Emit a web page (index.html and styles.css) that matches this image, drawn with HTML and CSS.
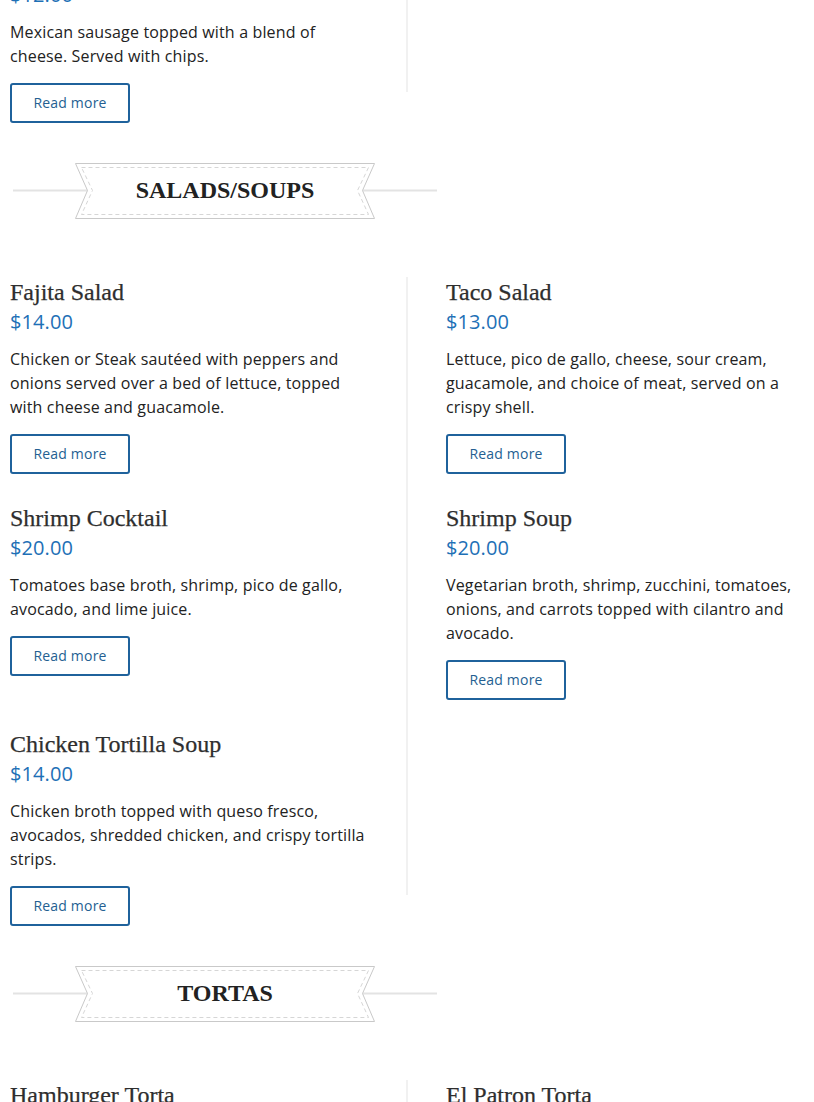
FILE: index.html
```html
<!DOCTYPE html>
<html lang="en">
<head>
<meta charset="utf-8">
<title>Menu</title>
<link rel="stylesheet" href="styles.css">
</head>
<body>
<main class="page">
  <section class="menu-grid menu-grid--first">
    <div class="cell cell-left">
      <div class="price">$12.00</div>
      <p class="desc">Mexican sausage topped with a blend of cheese. Served with chips.</p>
      <a class="btn" href="#">Read more</a>
    </div>
  </section>

  <header class="cat-head">
    <svg class="ribbon" width="430" height="57" viewBox="0 0 430 57" aria-hidden="true">
      <line x1="3" y1="27.5" x2="427" y2="27.5" stroke="#e3e3e3" stroke-width="2"/>
      <polygon points="65.5,0.5 364.5,0.5 352.5,27.5 364.5,55.5 65.5,55.5 77.5,27.5" fill="#fff" stroke="#c9c9c9" stroke-width="1"/>
      <polygon points="71.5,4.5 358.5,4.5 347.5,27.5 358.5,51.5 71.5,51.5 82.5,27.5" fill="none" stroke="#d6d6d6" stroke-width="1" stroke-dasharray="4 3"/>
    </svg>
    <h2 class="cat-title">SALADS/SOUPS</h2>
  </header>

  <section class="menu-grid">
    <div class="cell cell-left">
      <h3 class="title">Fajita Salad</h3>
      <div class="price">$14.00</div>
      <p class="desc">Chicken or Steak sautéed with peppers and onions served over a bed of lettuce, topped with cheese and guacamole.</p>
      <a class="btn" href="#">Read more</a>
    </div>
    <div class="cell cell-right">
      <h3 class="title">Taco Salad</h3>
      <div class="price">$13.00</div>
      <p class="desc">Lettuce, pico de gallo, cheese, sour cream, guacamole, and choice of meat, served on a crispy shell.</p>
      <a class="btn" href="#">Read more</a>
    </div>
    <div class="cell cell-left">
      <h3 class="title">Shrimp Cocktail</h3>
      <div class="price">$20.00</div>
      <p class="desc">Tomatoes base broth, shrimp, pico de gallo, avocado, and lime juice.</p>
      <a class="btn" href="#">Read more</a>
    </div>
    <div class="cell cell-right">
      <h3 class="title">Shrimp Soup</h3>
      <div class="price">$20.00</div>
      <p class="desc">Vegetarian broth, shrimp, zucchini, tomatoes, onions, and carrots topped with cilantro and avocado.</p>
      <a class="btn" href="#">Read more</a>
    </div>
    <div class="cell cell-left">
      <h3 class="title">Chicken Tortilla Soup</h3>
      <div class="price">$14.00</div>
      <p class="desc">Chicken broth topped with queso fresco, avocados, shredded chicken, and crispy tortilla strips.</p>
      <a class="btn" href="#">Read more</a>
    </div>
  </section>

  <header class="cat-head">
    <svg class="ribbon" width="430" height="57" viewBox="0 0 430 57" aria-hidden="true">
      <line x1="3" y1="27.5" x2="427" y2="27.5" stroke="#e3e3e3" stroke-width="2"/>
      <polygon points="65.5,0.5 364.5,0.5 352.5,27.5 364.5,55.5 65.5,55.5 77.5,27.5" fill="#fff" stroke="#c9c9c9" stroke-width="1"/>
      <polygon points="71.5,4.5 358.5,4.5 347.5,27.5 358.5,51.5 71.5,51.5 82.5,27.5" fill="none" stroke="#d6d6d6" stroke-width="1" stroke-dasharray="4 3"/>
    </svg>
    <h2 class="cat-title">TORTAS</h2>
  </header>

  <section class="menu-grid">
    <div class="cell cell-left">
      <h3 class="title">Hamburger Torta</h3>
      <div class="price">$13.00</div>
      <p class="desc">Beef patty, ham, cheese, lettuce, tomato, onion, jalapeños and avocado on a toasted bun.</p>
      <a class="btn" href="#">Read more</a>
    </div>
    <div class="cell cell-right">
      <h3 class="title">El Patron Torta</h3>
      <div class="price">$15.00</div>
      <p class="desc">Steak, chorizo, ham, cheese, lettuce, tomato, onion, jalapeños and avocado.</p>
      <a class="btn" href="#">Read more</a>
    </div>
  </section>
</main>
</body>
</html>
```

FILE: styles.css
```css
html, body {
  margin: 0;
  padding: 0;
  background: #fff;
}

body {
  font-family: "Open Sans", "Liberation Sans", sans-serif;
  font-size: 16px;
  line-height: 24px;
  color: #222;
}

.page {
  width: 794px;
  padding: 0 10px;
}

.menu-grid {
  position: relative;
  display: grid;
  grid-template-columns: 397px 1fr;
  row-gap: 29px;
}

.menu-grid::after {
  content: "";
  position: absolute;
  left: 396px;
  top: 0;
  bottom: 31px;
  width: 2px;
  background: #f1f1f1;
}

.menu-grid--first {
  margin-top: -20px;
}

.cell-left {
  grid-column: 1;
  padding-right: 37px;
}

.cell-right {
  grid-column: 2;
  padding-left: 39px;
}

.title {
  margin: 0;
  font-family: "Liberation Serif", "Times New Roman", serif;
  font-weight: normal;
  font-size: 24px;
  line-height: 30px;
  color: #2e2e2e;
  -webkit-text-stroke: 0.25px #2e2e2e;
}

.price {
  font-size: 20px;
  line-height: 30px;
  color: #1e70b6;
  letter-spacing: 0.1px;
}

.desc {
  margin: 10px 0 15px;
  letter-spacing: 0.15px;
}

.btn {
  display: inline-block;
  box-sizing: border-box;
  width: 120px;
  height: 40px;
  padding: 0;
  border: 2px solid #1f629c;
  border-radius: 3px;
  font-size: 14px;
  line-height: 36px;
  letter-spacing: 0.2px;
  text-align: center;
  white-space: nowrap;
  color: #245f92;
  text-decoration: none;
  vertical-align: top;
}

.cat-head {
  position: relative;
  width: 430px;
  height: 57px;
  margin: 40px 0 57px;
  display: flex;
  align-items: center;
  justify-content: center;
}

.ribbon {
  position: absolute;
  left: 0;
  top: 0;
}

.cat-title {
  position: relative;
  margin: 0 0 4px;
  font-family: "Liberation Serif", "Times New Roman", serif;
  font-weight: bold;
  font-size: 24px;
  line-height: 30px;
  color: #222;
}
```
